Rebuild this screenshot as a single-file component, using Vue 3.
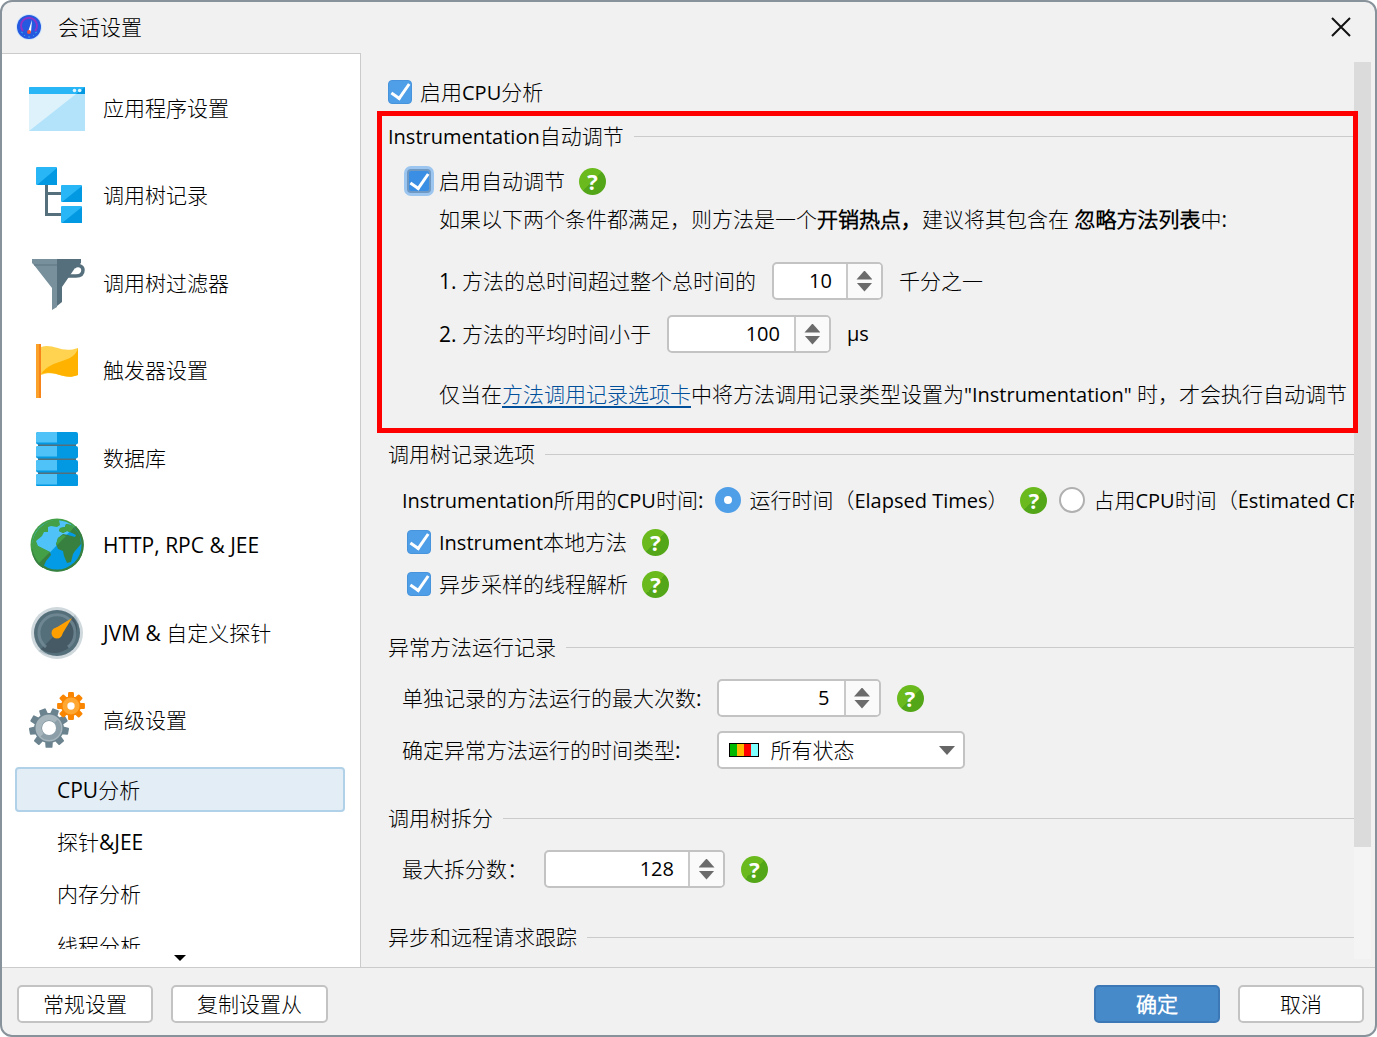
<script setup>
import { reactive, ref } from 'vue'

const categorias = [
  { id: 'app', label: '应用程序设置' },
  { id: 'tree', label: '调用树记录' },
  { id: 'filter', label: '调用树过滤器' },
  { id: 'trigger', label: '触发器设置' },
  { id: 'db', label: '数据库' },
  { id: 'http', label: 'HTTP, RPC & JEE' },
  { id: 'jvm', label: 'JVM & 自定义探针' },
  { id: 'advanced', label: '高级设置' },
]

const subItems = ['CPU分析', '探针&JEE', '内存分析', '线程分析']
const selected = ref('CPU分析')

const form = reactive({
  cpu: true,
  autoTune: true,
  perMille: 10,
  micros: 100,
  timeType: 'elapsed',
  nativeMethods: true,
  asyncSampling: true,
  maxRecorded: 5,
  status: 'all',
  maxSplits: 128,
})

function step(key, delta) {
  form[key] = Math.max(0, Number(form[key]) + delta)
}

function gear(cx, cy, outer, inner, teeth) {
  const pts = []
  const pitch = (Math.PI * 2) / teeth
  for (let i = 0; i < teeth; i++) {
    const a = i * pitch + Math.PI / 2
    const corners = [[-0.3, inner], [-0.19, outer], [0.19, outer], [0.3, inner]]
    for (const [k, r] of corners) {
      const t = a + k * pitch
      pts.push(`${(cx + r * Math.cos(t)).toFixed(1)} ${(cy + r * Math.sin(t)).toFixed(1)}`)
    }
  }
  return `M${pts.join('L')}Z`
}

const bigGear = gear(20, 36, 19, 14, 9)
const smallGear = gear(42, 14, 13, 9, 8)
</script>

<template>
  <div class="dialog">
    <header class="title-bar">
      <svg class="logo" viewBox="0 0 26 26" aria-hidden="true">
        <circle cx="13" cy="13" r="13" fill="#cfe6fb" />
        <circle cx="13" cy="13" r="12" fill="#2559e0" />
        <path d="M7 17a8 8 0 1 1 12 0" fill="none" stroke="#8a35c8" stroke-width="2" />
        <path d="M5 18l2 1M8 22l1-1M17 21l1 1M19 19l2-1M13 22v2" stroke="#35a5e8" stroke-width="1" />
        <path d="M16 6l-1 12h-3z" fill="#fff" />
        <circle cx="13" cy="18" r="2" fill="#f0503c" />
      </svg>
      <h1>会话设置</h1>
      <button type="button" class="close" aria-label="关闭">
        <svg viewBox="0 0 20 20"><path d="M1 1l18 18M19 1L1 19" fill="none" stroke="#111" stroke-width="2" /></svg>
      </button>
    </header>

    <div class="body">
      <nav class="sidebar">
        <div class="sidebar-list">
          <div class="categories">
            <button v-for="c in categorias" :key="c.id" type="button" class="category">
              <svg v-if="c.id === 'app'" viewBox="0 0 56 56">
                <path d="M0 7h56v44H0z" fill="#b3e3fa" />
                <path d="M0 14h47L0 51z" fill="#def2fc" />
                <path d="M0 8a1 1 0 0 1 1-1h54a1 1 0 0 1 1 1v6H0z" fill="#29b6f6" />
                <path d="M47 14l9-7v7z" fill="#0399e2" />
                <circle cx="45.500" cy="10.500" r="1.800" fill="#e1f5fe" />
                <circle cx="50.700" cy="10.500" r="1.800" fill="#e1f5fe" />
              </svg>
              <svg v-else-if="c.id === 'tree'" viewBox="0 0 56 56">
                <path d="M17.500 17v30.500H33M17.500 26.500H33" fill="none" stroke="#566f7c" stroke-width="3" />
                <g fill="#29b6f6">
                  <rect x="7" width="21" height="18" rx="1" />
                  <rect x="32" y="18" width="21" height="17" rx="1" />
                  <rect x="32" y="39" width="21" height="17" rx="1" />
                </g>
                <path d="M28 1v17H8zM53 19v16H33zM53 40v16H33z" fill="#0399e2" />
              </svg>
              <svg v-else-if="c.id === 'filter'" viewBox="0 0 56 56">
                <path d="M45 12c4-3 9-1 9 3 0 5-4 6-7 6h-9" fill="none" stroke="#566f7c" stroke-width="3.500" />
                <path d="M3 4h25v48l-5 3V33L5 10 3 8z" fill="#78909c" />
                <path d="M28 4h24v4l-2 2-4 3-13 19v15l-5 4z" fill="#566f7c" />
                <path d="M5 10h23" stroke="#5d7581" stroke-width="1" />
              </svg>
              <svg v-else-if="c.id === 'trigger'" viewBox="0 0 56 56">
                <path d="M12 5c13-4 20 7 37 1v27c-15 6-22-6-37 0z" fill="#ffd350" />
                <path d="M49 6v27c-15 6-22-6-37-1 11-16 33-10 37-26z" fill="#ffb300" />
                <path d="M7 2h5v54H7z" fill="#f68418" />
                <path d="M7 2h3v54H7z" fill="#fba129" />
              </svg>
              <svg v-else-if="c.id === 'db'" viewBox="0 0 56 56">
                <path d="M9 10h38v40H9z" fill="#546e7a" />
                <g v-for="n in 4" :key="n">
                  <rect x="7" :y="n * 14 - 12" width="42" height="12.500" rx="2" fill="#0399e2" />
                  <path :d="`M9 ${n * 14 - 12}h19v10.500H7v-8.500q0-2 2-2z`" fill="#4fc3f7" />
                </g>
              </svg>
              <svg v-else-if="c.id === 'http'" viewBox="0 0 56 56">
                <circle cx="28" cy="28" r="26.500" fill="#43a047" />
                <path d="M47 9a26.500 26.500 0 0 1-38 38z" fill="#388040" />
                <circle cx="28" cy="28" r="24.500" fill="#039be5" />
                <path d="M45 10A24.500 24.500 0 0 0 11 46z" fill="#4fc3f7" />
                <path d="M14 8c4-3 10-6 16-5l1 5-3 2-6-1-3 1v5l-4 0-2 4-6 5 2 5 12 6-10 11C5 40 3 34 3 27 4 19 8 12 14 8z" fill="#43a047" />
                <path d="M3 31l7 5 11-1 1 3-5 6-3 7C6 47 3 39 3 31z" fill="#388040" />
                <path d="M3 28l6 1 12 6-11 11C6 41 3 35 3 28z" fill="#43a047" />
                <path d="M30 14l1-3 5-1 1-3 5 1c4 3 7 7 9 11l1 8-6 7-2 3-2 8-4 1-3-7-1-5-5-2-2-5 2-6 5-4 5 1 7 2 1-2-4-2-5-2-4 2z" fill="#388040" />
                <path d="M30 14l1-3 5-1 1-3 5 1 3 2-4 5-3-1-4 2zM27 28l2-7 5-3 3 1-9 9z" fill="#43a047" />
              </svg>
              <svg v-else-if="c.id === 'jvm'" viewBox="0 0 56 56">
                <circle cx="28" cy="28" r="26" fill="#cfd8dc" />
                <path d="M46 10A26 26 0 0 1 10 46z" fill="#b0bec5" />
                <circle cx="28" cy="28" r="23" fill="#546e7a" />
                <path d="M44 12a23 23 0 0 1-32 32z" fill="#455a64" />
                <path d="M17 42a18 18 0 1 1 22 0" fill="none" stroke="#78909c" stroke-width="3" opacity="0.700" />
                <path d="M43 13L32 31l-7-7z" fill="#ffa000" />
                <circle cx="28" cy="28" r="5.500" fill="#ffa000" />
              </svg>
              <svg v-else viewBox="0 0 56 56">
                <path :d="bigGear" fill="#6b838f" stroke="#6b838f" stroke-width="2" stroke-linejoin="round" />
                <circle cx="20" cy="36" r="10.500" fill="none" stroke="#a7b5bc" stroke-width="6" />
                <path d="M28.500 27.500a12 12 0 0 1-17 17z" fill="#8c9fa9" />
                <circle cx="20" cy="36" r="7" fill="#fff" />
                <path :d="smallGear" fill="#f98500" stroke="#f98500" stroke-width="2" stroke-linejoin="round" />
                <circle cx="42" cy="14" r="6" fill="none" stroke="#ffa733" stroke-width="5" />
                <circle cx="42" cy="14" r="3.700" fill="#fff" />
              </svg>
              <span>{{ c.label }}</span>
            </button>
          </div>
          <div class="sub-items">
            <button
              v-for="item in subItems"
              :key="item"
              type="button"
              :class="['sub-item', { ativa: item === selected }]"
              @click="selected = item"
            >
              {{ item }}
            </button>
          </div>
        </div>
        <button type="button" class="more" aria-label="更多">
          <svg viewBox="0 0 12 6"><path d="M0 0h12L6 6z" fill="#000" /></svg>
        </button>
      </nav>

      <main class="content">
        <label class="check">
          <input v-model="form.cpu" type="checkbox" />
          <span>启用<span class="latin">CPU</span>分析</span>
        </label>

        <section class="marked">
          <h2><span><span class="latin">Instrumentation</span>自动调节</span></h2>
          <div class="row row-check">
            <label class="check focused">
              <input v-model="form.autoTune" type="checkbox" />
              启用自动调节
            </label>
            <button type="button" class="help">?</button>
          </div>
          <div class="details">
            <p>如果以下两个条件都满足，则方法是一个<b>开销热点，</b>建议将其包含在 <b>忽略方法列表</b>中:</p>
            <div class="row conditions">
              <label for="per-mille">1. 方法的总时间超过整个总时间的</label>
              <div class="spinner narrow">
                <input id="per-mille" v-model="form.perMille" inputmode="numeric" />
                <div class="steps">
                  <button type="button" aria-label="增加" @click="step('perMille', 1)"></button>
                  <button type="button" class="down" aria-label="减少" @click="step('perMille', -1)"></button>
                </div>
              </div>
              <span>千分之一</span>
            </div>
            <div class="row">
              <label for="micros">2. 方法的平均时间小于</label>
              <div class="spinner">
                <input id="micros" v-model="form.micros" inputmode="numeric" />
                <div class="steps">
                  <button type="button" aria-label="增加" @click="step('micros', 1)"></button>
                  <button type="button" class="down" aria-label="减少" @click="step('micros', -1)"></button>
                </div>
              </div>
              <span class="latin">µs</span>
            </div>
            <p class="note">仅当在<a href="#recording">方法调用记录选项卡</a>中将方法调用记录类型设置为<span class="latin">"Instrumentation"</span> 时，才会执行自动调节</p>
          </div>
        </section>

        <section id="recording" class="recording">
          <h2>调用树记录选项</h2>
          <div class="row radios">
            <span><span class="latin">Instrumentation</span>所用的<span class="latin">CPU</span>时间:</span>
            <label class="radio">
              <input v-model="form.timeType" type="radio" name="time-type" value="elapsed" />
              <span>运行时间（<span class="latin">Elapsed Times</span>）</span>
            </label>
            <button type="button" class="help">?</button>
            <label class="radio">
              <input v-model="form.timeType" type="radio" name="time-type" value="cpu" />
              <span>占用<span class="latin">CPU</span>时间（<span class="latin">Estimated CPU</span></span>
            </label>
          </div>
          <div class="check-grid">
            <label class="check">
              <input v-model="form.nativeMethods" type="checkbox" />
              <span><span class="latin">Instrument</span>本地方法</span>
            </label>
            <button type="button" class="help">?</button>
            <label class="check">
              <input v-model="form.asyncSampling" type="checkbox" />
              异步采样的线程解析
            </label>
            <button type="button" class="help">?</button>
          </div>
        </section>

        <section class="exceptional">
          <h2>异常方法运行记录</h2>
          <div class="fields">
            <label for="max-recorded">单独记录的方法运行的最大次数:</label>
            <div class="row">
              <div class="spinner">
                <input id="max-recorded" v-model="form.maxRecorded" inputmode="numeric" />
                <div class="steps">
                  <button type="button" aria-label="增加" @click="step('maxRecorded', 1)"></button>
                  <button type="button" class="down" aria-label="减少" @click="step('maxRecorded', -1)"></button>
                </div>
              </div>
              <button type="button" class="help">?</button>
            </div>
            <label for="status">确定异常方法运行的时间类型:</label>
            <div class="select">
              <select id="status" v-model="form.status">
                <option value="all">所有状态</option>
              </select>
              <svg class="states" viewBox="0 0 30 14" aria-hidden="true">
                <path d="M0 0h30v14H0z" />
                <path d="M1 1h7v12H1z" fill="#00b900" />
                <path d="M8 1h7v12H8z" fill="#ffb900" />
                <path d="M15 1h7v12h-7z" fill="#f00" />
                <path d="M22 1h7v12h-7z" fill="#80ffff" />
              </svg>
              <svg class="caret" viewBox="0 0 16 9" aria-hidden="true"><path d="M0 0h16L8 9z" fill="#666" /></svg>
            </div>
          </div>
        </section>

        <section class="splitting">
          <h2>调用树拆分</h2>
          <div class="row">
            <label for="max-splits">最大拆分数：</label>
            <div class="spinner wide">
              <input id="max-splits" v-model="form.maxSplits" inputmode="numeric" />
              <div class="steps">
                <button type="button" aria-label="增加" @click="step('maxSplits', 1)"></button>
                <button type="button" class="down" aria-label="减少" @click="step('maxSplits', -1)"></button>
              </div>
            </div>
            <button type="button" class="help">?</button>
          </div>
        </section>

        <section class="tracking">
          <h2>异步和远程请求跟踪</h2>
        </section>
      </main>
      <div class="scrollbar"><div class="thumb"></div></div>
    </div>

    <footer class="footer">
      <button type="button" class="btn">常规设置</button>
      <button type="button" class="btn copy">复制设置从</button>
      <button type="button" class="btn primary">确定</button>
      <button type="button" class="btn cancel">取消</button>
    </footer>
  </div>
</template>

<style>
body {
  margin: 0;
  background: #fff;
}
</style>

<style scoped>
* {
  box-sizing: border-box;
}

.dialog {
  display: flex;
  flex-direction: column;
  height: 100vh;
  overflow: hidden;
  border: 2px solid #87929a;
  border-radius: 12px;
  background: #f1f1f1;
  color: #000;
  font-family: 'Open Sans', 'Noto Sans CJK SC Light', 'Noto Sans CJK SC', sans-serif;
  font-size: 21px;
  line-height: 28px;
  white-space: nowrap;
}

button,
input,
select {
  margin: 0;
  padding: 0;
  border: 0;
  background: none;
  color: inherit;
  font: inherit;
}

h1,
h2,
p {
  margin: 0;
  font-size: 21px;
  font-weight: 400;
}

.latin {
  font-size: 20px;
  line-height: 20px;
}

.title-bar {
  display: flex;
  align-items: center;
  flex: none;
  height: 51px;
  padding: 0 24px 2px 14px;
}

.logo {
  width: 26px;
  height: 26px;
  margin-right: 16px;
}

.close {
  width: 20px;
  height: 20px;
  margin-left: auto;
}

svg {
  display: block;
  flex: none;
}

.body {
  display: flex;
  flex: 1;
  min-height: 0;
}

.sidebar {
  display: flex;
  flex-direction: column;
  flex: none;
  width: 359px;
  padding: 10px 15px 0 13px;
  border-top: 1px solid #cbcbcb;
  border-right: 1px solid #cbcbcb;
  background: #fff;
}

.sidebar-list {
  flex: 1;
  min-height: 0;
  overflow: hidden;
}

.categories {
  display: grid;
  grid-auto-rows: 1fr;
  height: 700px;
}

.category {
  display: flex;
  align-items: center;
  gap: 18px;
  padding-left: 14px;
}

.category svg {
  width: 56px;
  height: 56px;
}

.sub-items {
  display: flex;
  flex-direction: column;
  gap: 7px;
  padding-top: 3px;
}

.sub-item {
  flex: none;
  height: 45px;
  padding-left: 40px;
  border: 2px solid transparent;
  border-radius: 4px;
  text-align: left;
}

.sub-item.ativa {
  border-color: #b0d1e8;
  background: #e3edf6;
}

.more {
  display: flex;
  align-items: center;
  justify-content: center;
  flex: none;
  height: 18px;
}

.more svg {
  width: 12px;
  height: 6px;
}

.content {
  flex: 1;
  min-width: 0;
  padding: 27px 0 0 27px;
}

section {
  position: relative;
}

h2 {
  display: flex;
  align-items: center;
  gap: 10px;
  height: 28px;
}

h2::after {
  content: '';
  flex: 1;
  height: 1px;
  background: #cbcbcb;
}

.row {
  display: flex;
  align-items: center;
  gap: 16px;
  height: 38px;
}

.check,
.radio {
  display: flex;
  align-items: center;
  gap: 8px;
}

.check {
  height: 24px;
}

.check input {
  flex: none;
  width: 24px;
  height: 24px;
  appearance: none;
  border: 1px solid #4894dc;
  border-radius: 4px;
  background: #4f9ee8;
}

.check input:checked::before {
  content: '';
  display: block;
  width: 8px;
  height: 16px;
  margin: 0 0 0 6px;
  border: solid #fff;
  border-width: 0 3px 3px 0;
  transform: translateY(-1px) rotate(35deg);
}

.check.focused input {
  border: 2px solid #6f98c2;
  background: #3a8fe4;
  box-shadow: 0 0 0 3px #9cc6ef;
}

.check.focused input:checked::before {
  margin: 0 0 0 5px;
}

.radio input {
  flex: none;
  width: 26px;
  height: 26px;
  appearance: none;
  border: 2px solid #b0b0b0;
  border-radius: 50%;
  background: #fff;
}

.radio input:checked {
  border: 9px solid #4f9ee8;
}

.help {
  flex: none;
  width: 27px;
  height: 27px;
  border-radius: 50%;
  background: linear-gradient(135deg, #6aba1e 50%, #53a617 50%);
  color: #fff;
  font-size: 22px;
  font-weight: 700;
  line-height: 27px;
  text-align: center;
}

.spinner {
  display: flex;
  flex: none;
  width: 164px;
  height: 38px;
  border: 2px solid #c3c3c3;
  border-radius: 5px;
  background: #fff;
}

.spinner.narrow {
  width: 111px;
}

.spinner.wide {
  width: 181px;
}

.spinner input {
  flex: 1;
  min-width: 0;
  padding-right: 14px;
  outline: 0;
  font-size: 20px;
  text-align: right;
}

.steps {
  display: flex;
  flex-direction: column;
  align-items: center;
  justify-content: center;
  gap: 3px;
  width: 35px;
  border-left: 2px solid #c9c9c9;
  border-radius: 0 3px 3px 0;
  background: #fafafa;
}

.steps button {
  width: 16px;
  height: 9px;
  background: #6b6b6b;
  clip-path: polygon(50% 0, 100% 100%, 0 100%);
}

.steps .down {
  clip-path: polygon(0 0, 100% 0, 50% 100%);
}

.marked {
  margin-top: 18px;
}

/* red frame around the section, lies over the scrollbar edge */
.marked::after {
  content: '';
  position: absolute;
  z-index: 1;
  inset: -11px -4px -20px -11px;
  border: 5px solid #f00;
  pointer-events: none;
}

.row-check {
  gap: 14px;
  margin-top: 12px;
  padding-left: 19px;
}

.details {
  padding-left: 51px;
}

.details p {
  height: 38px;
  line-height: 38px;
}

.conditions {
  margin: 24px 0 15px;
}

.details .note {
  margin-top: 22px;
}

a {
  color: #004f9a;
  text-decoration: underline;
  text-decoration-thickness: 2px;
  text-underline-offset: 4px;
}

.recording {
  margin-top: 27px;
}

.radios {
  gap: 12px;
  margin: 13px 0 4px;
  padding-left: 14px;
  overflow: hidden;
}

.check-grid {
  display: grid;
  grid-template-columns: max-content max-content;
  grid-auto-rows: 38px;
  align-items: center;
  gap: 4px 14px;
  padding-left: 19px;
}

.exceptional {
  margin-top: 30px;
}

.fields {
  display: grid;
  grid-template-columns: max-content max-content;
  align-items: center;
  gap: 14px 15px;
  margin-top: 18px;
  padding-left: 14px;
}

.select {
  position: relative;
  width: 248px;
  height: 38px;
}

select {
  width: 100%;
  height: 100%;
  padding-left: 52px;
  appearance: none;
  border: 2px solid #c3c3c3;
  border-radius: 5px;
  background: #fff;
}

.states {
  position: absolute;
  top: 12px;
  left: 12px;
  width: 30px;
  height: 14px;
}

.caret {
  position: absolute;
  top: 15px;
  right: 10px;
  width: 16px;
  height: 9px;
}

.splitting,
.tracking {
  margin-top: 35px;
}

.splitting .row {
  margin-top: 18px;
  padding-left: 14px;
}

.scrollbar {
  flex: none;
  width: 17px;
  margin: 9px 4px 8px 0;
  background: #f4f4f4;
}

.thumb {
  height: 87.5%;
  background: #dbdbdb;
}

.footer {
  display: flex;
  align-items: flex-start;
  flex: none;
  gap: 18px;
  padding: 17px 11px 12px 15px;
  border-top: 1px solid #cbcbcb;
}

.btn {
  width: 136px;
  height: 38px;
  border: 2px solid #c3c3c3;
  border-radius: 5px;
  background: #fff;
}

.btn.copy {
  width: 157px;
}

.btn.cancel {
  width: 126px;
}

.btn.primary {
  width: 126px;
  margin-left: auto;
  border-color: #3b78b5;
  background: #478aca;
  color: #fff;
  font-weight: 600;
}
</style>
